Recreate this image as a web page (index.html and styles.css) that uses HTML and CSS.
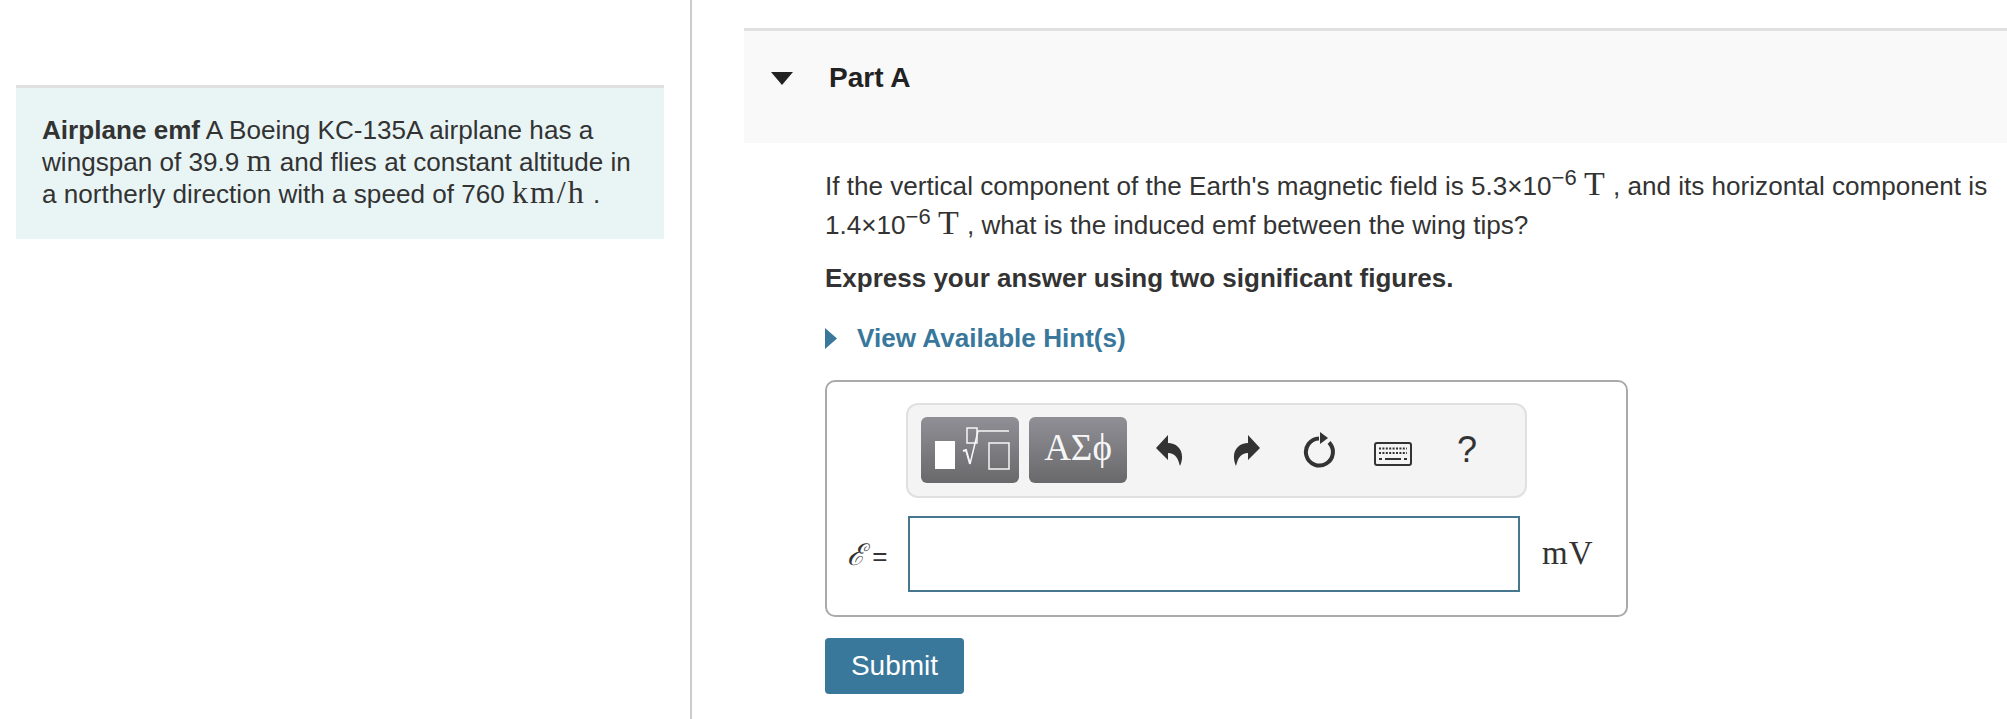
FILE: index.html
```html
<!DOCTYPE html>
<html lang="en">
<head>
    <meta charset="UTF-8">
    <title>Airplane emf</title>
    <link rel="stylesheet" href="styles.css">
</head>
<body>
<div class="intro-col">
    <div class="intro">
        <b>Airplane emf</b> A Boeing KC-135A airplane has a wingspan of 39.9 <span class="math">m</span> and flies at constant altitude in a northerly direction with a speed of 760 <span class="math speed">km/h</span> .
    </div>
</div>
<div class="part-col">
    <div class="part-header">
        <svg class="part-arrow" width="22" height="13" viewBox="0 0 22 13"><path d="M0 0H22L11 13Z" fill="#222"/></svg>
        <h2>Part A</h2>
    </div>
    <div class="part-body">
        <p class="question">If the vertical component of the Earth's magnetic field is 5.3×10<sup>−6</sup> <span class="math tesla">T</span> , and its horizontal component is 1.4×10<sup>−6</sup> <span class="math tesla">T</span> , what is the induced emf between the wing tips?</p>
        <p class="instruction">Express your answer using two significant figures.</p>
        <div class="hint">
            <svg width="12" height="21" viewBox="0 0 12 21"><path d="M0 0L12 10.5L0 21Z" fill="#39779b"/></svg>
            <span>View Available Hint(s)</span>
        </div>
        <div class="answer-box">
            <div class="toolbar">
                <div class="tool-btn">
                    <svg width="98" height="66" viewBox="0 0 98 66" fill="none" stroke="#f6f6f6" stroke-width="1.5">
                        <rect x="14" y="24" width="20" height="28" fill="#fff" stroke="none"/>
                        <rect x="46" y="11" width="10" height="15"/>
                        <polyline points="42,34 45,33 49,47" stroke-width="2"/>
                        <polyline points="49,47 57,14 88,14"/>
                        <rect x="68" y="26" width="20" height="26"/>
                    </svg>
                </div>
                <div class="tool-btn symbols">ΑΣϕ</div>
                <svg class="undo" width="27" height="31" viewBox="0 0 27 31"><path d="M0 13L12 0V8C22 8 30 17 24 31C22 23 19 18 12 18V25Z" fill="#333"/></svg>
                <svg class="redo" width="27" height="31" viewBox="0 0 27 31"><path d="M27 13L15 0V8C5 8 -3 17 3 31C5 23 8 18 15 18V25Z" fill="#333"/></svg>
                <svg class="reset" width="32" height="36" viewBox="0 0 32 36"><path d="M16 6.5A13.5 13.5 0 1 0 26 10.5" fill="none" stroke="#333" stroke-width="4"/><path d="M17 0L25 6L17 12Z" fill="#333"/></svg>
                <svg class="keyboard" width="38" height="24" viewBox="0 0 38 24" fill="none" stroke="#333">
                    <rect x="1" y="1" width="36" height="22" rx="2" stroke-width="2"/>
                    <line x1="5" y1="6.5" x2="33" y2="6.5" stroke-width="2" stroke-dasharray="2 1.4"/>
                    <line x1="5" y1="11" x2="33" y2="11" stroke-width="2" stroke-dasharray="2 1.4"/>
                    <line x1="5" y1="17" x2="8" y2="17" stroke-width="2"/>
                    <line x1="11" y1="17" x2="27" y2="17" stroke-width="2"/>
                    <line x1="30" y1="17" x2="33" y2="17" stroke-width="2"/>
                </svg>
                <span class="help">?</span>
            </div>
            <div class="answer-row">
                <span class="answer-label"><span class="script-e">ℰ</span> =</span>
                <div class="answer-input"></div>
                <span class="math unit">mV</span>
            </div>
        </div>
        <button class="submit">Submit</button>
    </div>
</div>
</body>
</html>
```

FILE: styles.css
```css
html, body {
    height: 100%;
}

body {
    margin: 0;
    display: flex;
    overflow: hidden;
    background-color: #fff;
    color: #333;
    font-family: 'Liberation Sans', Arial, sans-serif;
    font-size: 26.1px;
}

.math {
    font-family: 'Liberation Serif', 'Times New Roman', serif;
    font-size: 32px;
    letter-spacing: 1px;
    line-height: 0;
}

.speed {
    letter-spacing: 2px;
}

.tesla {
    font-size: 34px;
}

/* left column */
.intro-col {
    box-sizing: border-box;
    flex: none;
    width: 692px;
    padding: 85px 26px 0 16px;
    border-right: 2px solid #ccc;
}

.intro {
    box-sizing: border-box;
    height: 154px;
    padding: 26px 26px 0;
    border-top: 3px solid #e0e0e0;
    background-color: #e9f5f5;
    line-height: 32px;
}

/* right column */
.part-col {
    flex: 1;
    min-width: 0;
    padding: 28px 0 0 52px;
}

.part-header {
    box-sizing: border-box;
    display: flex;
    align-items: flex-start;
    height: 115px;
    padding: 31px 0 0 27px;
    border-top: 3px solid #e0e0e0;
    background-color: #f9f9f9;
}

.part-arrow {
    margin-top: 10px;
}

.part-header h2 {
    margin: 0 0 0 36px;
    font-size: 28px;
    line-height: 32px;
    color: #222;
}

.part-body {
    padding: 24px 0 0 81px;
}

.part-body p {
    margin: 0;
    line-height: 38.5px;
}

.question {
    width: 1172px;
}

.question sup {
    font-size: 22px;
    line-height: 0;
    vertical-align: 10px;
}

.instruction {
    margin-top: 15px !important;
    font-weight: bold;
    font-size: 26px;
}

.hint {
    display: flex;
    align-items: center;
    gap: 20px;
    height: 38px;
    margin-top: 22px;
    font-weight: bold;
    color: #39779b;
}

/* answer box */
.answer-box {
    box-sizing: border-box;
    width: 803px;
    height: 237px;
    margin-top: 22px;
    padding: 21px 0 0 79px;
    border: 2px solid #aaa;
    border-radius: 10px;
}

.toolbar {
    box-sizing: border-box;
    display: flex;
    align-items: center;
    width: 621px;
    height: 95px;
    padding-left: 13px;
    border: 2px solid #e0e0e0;
    border-radius: 12px;
    background-color: #f4f4f4;
}

.tool-btn {
    flex: none;
    width: 98px;
    height: 66px;
    margin-right: 10px;
    border-radius: 6px;
    background: linear-gradient(#908f96, #69696b);
}

.tool-btn svg {
    display: block;
}

.symbols {
    margin-right: 0;
    color: #f6f6f6;
    font-family: 'Liberation Serif', serif;
    font-size: 37px;
    line-height: 62px;
    text-align: center;
}

.undo { margin-left: 29px; }
.redo { margin-left: 50px; }
.reset { margin-left: 43px; }
.keyboard { margin: 8px 0 0 39px; }

.help {
    margin-left: 45px;
    font-size: 36px;
    line-height: 36px;
    color: #333;
}

.answer-row {
    display: flex;
    align-items: center;
    margin: 18px 0 0 -79px;
}

.answer-label {
    box-sizing: border-box;
    flex: none;
    width: 81px;
    padding-left: 20px;
    white-space: nowrap;
}

.script-e {
    font-family: 'DejaVu Serif', serif;
    font-size: 30px;
    font-style: italic;
}

.answer-input {
    box-sizing: border-box;
    flex: none;
    width: 612px;
    height: 76px;
    border: 2px solid #47778f;
}

.unit {
    margin: -2px 0 0 22px;
    font-size: 33px;
    line-height: 40px;
}

.submit {
    display: block;
    width: 139px;
    height: 56px;
    margin-top: 21px;
    padding: 0;
    border: 0;
    border-radius: 4px;
    background-color: #39779b;
    color: #fff;
    font-family: inherit;
    font-size: 28px;
}
```
